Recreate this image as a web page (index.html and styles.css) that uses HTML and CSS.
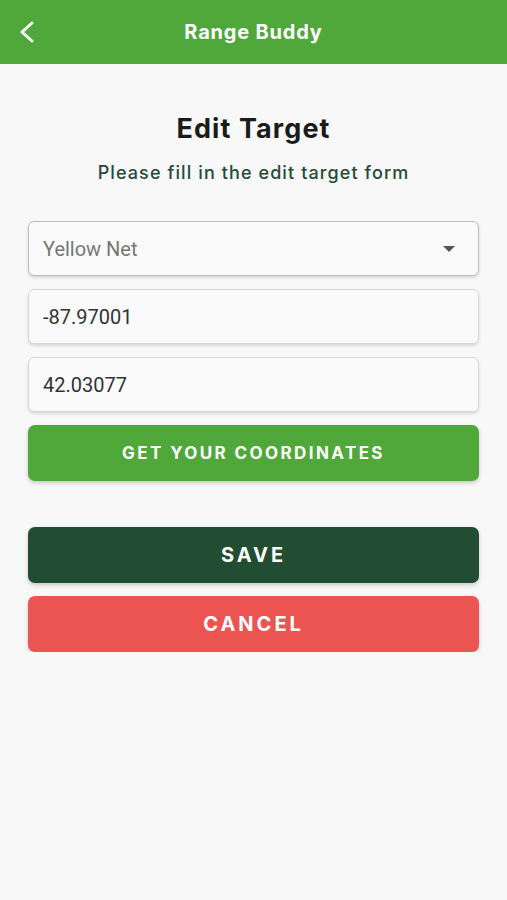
FILE: index.html
```html
<!DOCTYPE html>
<html lang="en">
<head>
    <meta charset="UTF-8">
    <meta name="viewport" content="width=device-width, initial-scale=1.0">
    <title>Range Buddy</title>
    <link rel="stylesheet" href="styles.css">
</head>
<body>
    <header class="barra">
        <button class="voltar" type="button" aria-label="Back">
            <svg width="16" height="22" viewBox="0 0 16 22"><path d="M13 2 L3 11 L13 20" fill="none" stroke="#ffffff" stroke-width="3" stroke-linecap="round" stroke-linejoin="round"/></svg>
        </button>
        <h1>Range Buddy</h1>
    </header>

    <main class="caixa">
        <h2>Edit Target</h2>
        <p class="sub">Please fill in the edit target form</p>

        <form class="form">
            <div class="campo select">
                <span class="placeholder">Yellow Net</span>
                <span class="seta"></span>
            </div>
            <div class="campo">-87.97001</div>
            <div class="campo">42.03077</div>
            <button type="button" class="btn verde">GET YOUR COORDINATES</button>

            <button type="button" class="btn escuro grande">SAVE</button>
            <button type="button" class="btn vermelho grande">CANCEL</button>
        </form>
    </main>
</body>
</html>
```
FILE: styles.css
```css
body {
    margin: 0;
    background-color: #f8f8f8;
    font-family: Inter, "Noto Sans", sans-serif;
}
.barra {
    height: 64px;
    background-color: #50a83a;
    display: flex;
    align-items: center;
    justify-content: center;
    position: relative;
}
.barra h1 {
    margin: 0;
    color: #ffffff;
    font-size: 20px;
    font-weight: 700;
    letter-spacing: 0.8px;
}
.voltar {
    position: absolute;
    left: 19px;
    top: 21px;
    background: none;
    border: none;
    padding: 0;
    display: flex;
}
.caixa {
    padding: 0 28px;
}
.caixa h2 {
    margin: 48px 0 0;
    text-align: center;
    font-size: 27px;
    font-weight: 700;
    color: #1b1b1b;
    line-height: 34px;
    letter-spacing: 1.1px;
}
.sub {
    margin: 14px 0 0;
    text-align: center;
    font-size: 18px;
    font-weight: 500;
    color: #264a3a;
    line-height: 26px;
    letter-spacing: 1.1px;
}
.form {
    margin-top: 35px;
    display: flex;
    flex-direction: column;
    gap: 13px;
}
.campo {
    height: 55px;
    box-sizing: border-box;
    background: #fafafa;
    border: 1px solid #d6d6d6;
    border-radius: 6px;
    box-shadow: 0 2px 3px rgba(0, 0, 0, 0.12);
    display: flex;
    align-items: center;
    padding: 0 14px;
    font-family: Roboto, sans-serif;
    font-size: 20px;
    color: #333333;
}
.select {
    justify-content: space-between;
    border-color: #bdbdbd;
}
.placeholder {
    color: #777777;
}
.seta {
    width: 0;
    height: 0;
    border-left: 6px solid transparent;
    border-right: 6px solid transparent;
    border-top: 6px solid #555555;
    margin-right: 9px;
}
.btn {
    height: 56px;
    border: none;
    border-radius: 7px;
    color: #ffffff;
    font-family: Inter, sans-serif;
    font-weight: 700;
    font-size: 17px;
    letter-spacing: 2.4px;
    box-shadow: 0 2px 4px rgba(0, 0, 0, 0.2);
    cursor: pointer;
}
.verde {
    background-color: #50a83a;
}
.grande {
    font-size: 20px;
    letter-spacing: 3px;
}
.escuro {
    background-color: #214d33;
    margin-top: 33px;
}
.vermelho {
    background-color: #ec5451;
}
```
